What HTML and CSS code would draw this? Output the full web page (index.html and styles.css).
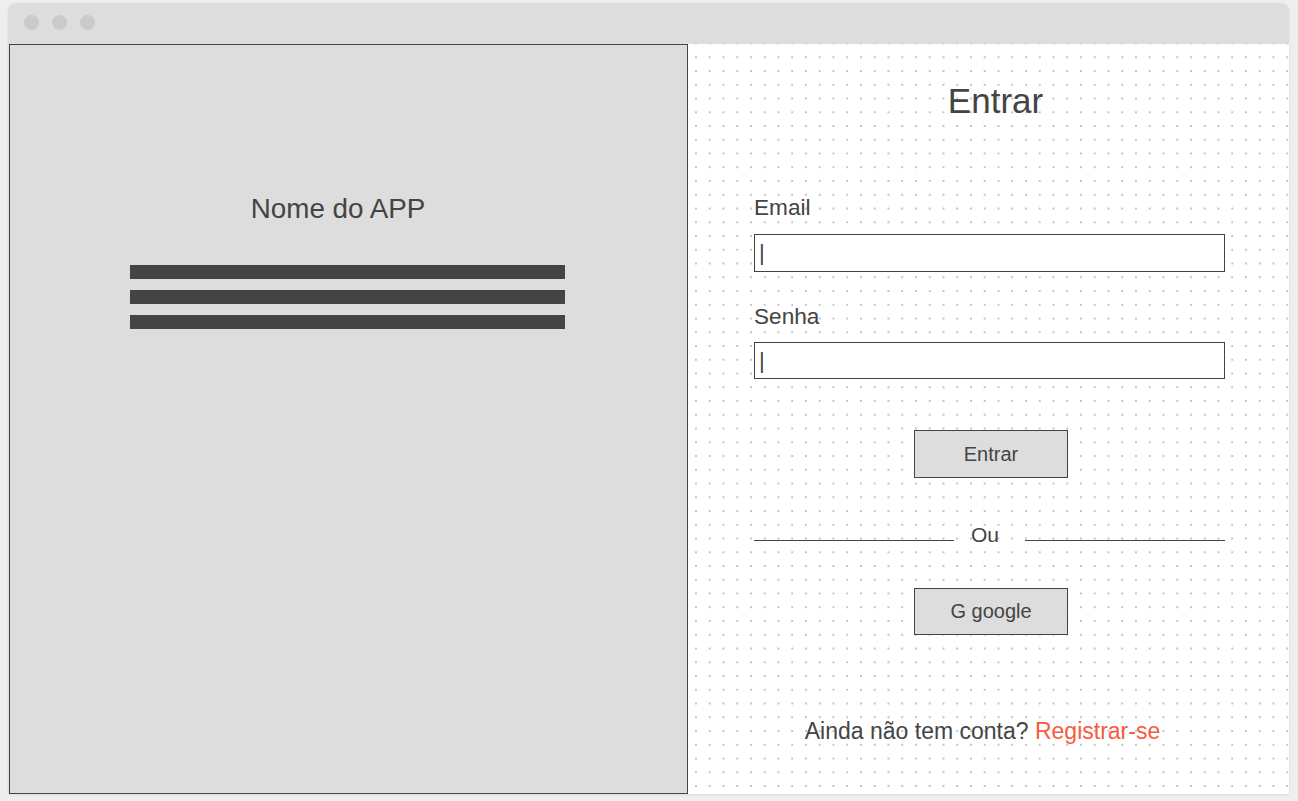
FILE: index.html
```html
<!DOCTYPE html>
<html lang="pt">
<head>
<meta charset="utf-8">
<title>Entrar</title>
<link rel="stylesheet" href="styles.css">
</head>
<body>
<div class="window">
  <div class="titlebar">
    <span class="dot"></span><span class="dot"></span><span class="dot"></span>
  </div>
  <div class="content">
    <section class="brand">
      <h2 class="app-name">Nome do APP</h2>
      <div class="bars">
        <div class="bar"></div>
        <div class="bar"></div>
        <div class="bar"></div>
      </div>
    </section>
    <section class="login">
      <div class="form">
        <h1 class="title">Entrar</h1>
        <label class="label label-email">Email</label>
        <div class="input input-email">|</div>
        <label class="label label-senha">Senha</label>
        <div class="input input-senha">|</div>
        <div class="btn btn-entrar">Entrar</div>
        <div class="divider">
          <span class="line"></span>
          <span class="ou">Ou</span>
          <span class="line"></span>
        </div>
        <div class="btn btn-google">G google</div>
        <p class="signup">Ainda não tem conta? <span class="link">Registrar-se</span></p>
      </div>
    </section>
  </div>
</div>
</body>
</html>
```

FILE: styles.css
```css
* { box-sizing: border-box; }
html, body { margin: 0; padding: 0; }
body {
  background: #eeeeee;
  font-family: "Liberation Sans", Arial, sans-serif;
  color: #444;
  width: 1298px;
  height: 801px;
  overflow: hidden;
}
.window {
  margin: 3px 0 0 8px;
  width: 1281px;
  height: 791px;
  background: #dddddd;
  border-radius: 8px 8px 0 0;
  box-shadow: 0 1px 3px rgba(0,0,0,0.08);
  display: flex;
  flex-direction: column;
  overflow: hidden;
}
.titlebar {
  height: 41px;
  flex: none;
  display: flex;
  align-items: flex-start;
  gap: 13px;
  padding: 12px 0 0 16px;
}
.dot {
  width: 15px;
  height: 15px;
  border-radius: 50%;
  background: #cacaca;
}
.content {
  flex: 1;
  display: flex;
}
.brand {
  width: 679px;
  margin-left: 1px;
  border: 1px solid #444;
  background: #dddddd;
  padding-top: 148px;
}
.app-name {
  margin: 0;
  font-weight: normal;
  font-size: 27.8px;
  line-height: 32px;
  text-align: center;
  padding-right: 21px;
  color: #444;
}
.bars {
  margin: 40px 0 0 120px;
  display: flex;
  flex-direction: column;
  gap: 11px;
}
.bar {
  width: 435px;
  height: 14px;
  background: #444;
}
.login {
  flex: 1;
  background-color: #ffffff;
  background-image: radial-gradient(circle at center, #c4c4c4 0.9px, rgba(255,255,255,0) 1.4px);
  background-size: 13.75px 13.75px;
  background-position: 1.1px 6.4px;
}
.form {
  width: 471px;
  margin-left: 66px;
  padding-top: 37px;
  display: flex;
  flex-direction: column;
}
.title {
  margin: 0;
  font-weight: normal;
  font-size: 35px;
  line-height: 40px;
  text-align: center;
  padding-left: 12px;
}
.label {
  display: block;
  font-size: 22.6px;
  line-height: 26px;
  margin-bottom: 13px;
}
.label-email { margin-top: 74px; }
.label-senha { margin-top: 32px; margin-bottom: 12px; }
.input {
  background: #fff;
  border: 1px solid #444;
  font-size: 22px;
  line-height: 26px;
  padding-left: 4px;
  display: flex;
  align-items: center;
}
.input-email { height: 38px; }
.input-senha { height: 37px; }
.btn {
  width: 154px;
  background: #dddddd;
  border: 1px solid #444;
  font-size: 20px;
  display: flex;
  align-items: center;
  justify-content: center;
  margin-left: 160px;
}
.btn-entrar { height: 48px; margin-top: 51px; }
.divider {
  display: flex;
  align-items: flex-start;
  margin-top: 46px;
  height: 24px;
}
.line {
  width: 200px;
  height: 1px;
  margin-top: 16px;
  background: #444;
}
.ou {
  font-size: 21px;
  line-height: 22px;
  margin: 0 26px 0 17px;
}
.btn-google { height: 47px; margin-top: 40px; }
.signup {
  margin: 83px 0 0 0;
  font-size: 23px;
  line-height: 26px;
  text-align: center;
  padding-right: 14px;
}
.link { color: #f85a40; }
```
